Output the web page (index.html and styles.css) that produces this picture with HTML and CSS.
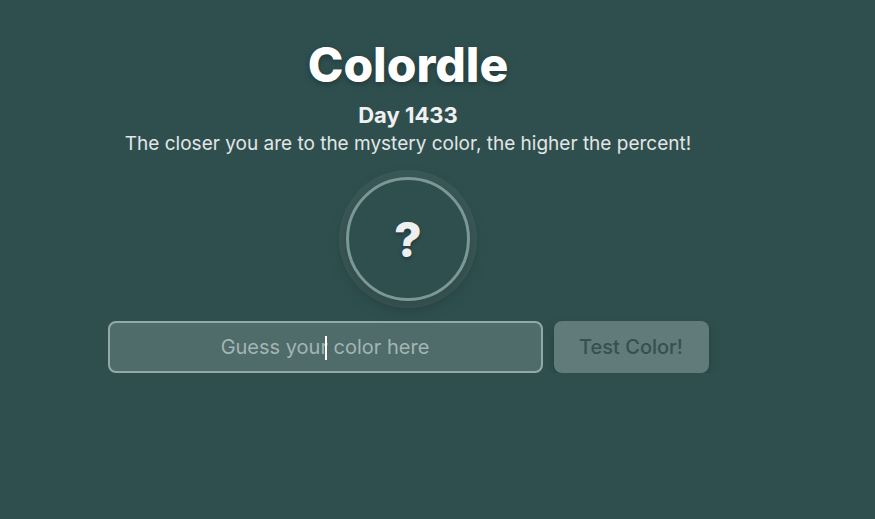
FILE: index.html
```html
<!DOCTYPE html>
<html lang="en">
<head>
    <meta charset="UTF-8">
    <meta name="viewport" content="width=device-width, initial-scale=1.0">
    <title>Colordle</title>
    <link rel="stylesheet" href="styles.css">
</head>
<body>

<main class="game">
    <h1 class="title">Colordle</h1>
    <h2 class="day">Day 1433</h2>
    <p class="intro">The closer you are to the mystery color, the higher the percent!</p>

    <div class="swatch">
        <span>?</span>
    </div>

    <form class="guess-form" onsubmit="return false">
        <div class="input-wrap">
            <input type="text" class="guess-input" placeholder="Guess your color here">
            <span class="caret"></span>
        </div>
        <button type="submit" class="guess-button">Test Color!</button>
    </form>
</main>

</body>
</html>
```

FILE: styles.css
```css
body {
    font-family: Inter, 'Noto Sans', sans-serif;
    background-color: #2f4f4f;
    margin: 0;
    color: #fff;
}
.game {
    width: 816px;
    display: flex;
    flex-direction: column;
    align-items: center;
    padding-top: 34px;
}
.title {
    margin: 0;
    font-size: 48px;
    font-weight: 800;
    line-height: 62px;
    text-shadow: 0 2px 6px rgba(0, 0, 0, 0.3);
}
.day {
    margin: 4px 0 0;
    font-size: 22px;
    font-weight: 700;
    line-height: 30px;
    color: #f0f0f0;
}
.intro {
    margin: 2px 0 0;
    font-size: 19px;
    line-height: 24px;
    color: #e2e6e6;
}
.swatch {
    margin-top: 21px;
    width: 118px;
    height: 118px;
    border-radius: 50%;
    border: 3px solid #7b9796;
    box-shadow: 0 0 0 7px rgba(255, 255, 255, 0.06), 0 6px 18px rgba(0, 0, 0, 0.25);
    display: flex;
    align-items: center;
    justify-content: center;
}
.swatch span {
    font-size: 48px;
    font-weight: 800;
    color: #eef0f0;
    text-shadow: 0 2px 4px rgba(0, 0, 0, 0.3);
}
.guess-form {
    margin-top: 20px;
    display: flex;
    gap: 11px;
}
.input-wrap {
    position: relative;
}
.guess-input {
    width: 435px;
    height: 52px;
    box-sizing: border-box;
    border: 2px solid #93a9a8;
    border-radius: 8px;
    background-color: #4f6b6a;
    color: #fff;
    font-family: inherit;
    font-size: 20px;
    text-align: center;
    outline: none;
}
.guess-input::placeholder {
    color: #a3b5b4;
}
/* blinking text cursor, as it looks while the field has focus */
.caret {
    position: absolute;
    left: 217px;
    top: 15px;
    width: 2px;
    height: 24px;
    background-color: #fff;
}
.guess-button {
    width: 155px;
    height: 52px;
    border: none;
    border-radius: 8px;
    background-color: #617b7a;
    color: #35504f;
    font-family: inherit;
    font-size: 20px;
    font-weight: 500;
    box-shadow: 0 4px 10px rgba(0, 0, 0, 0.2);
    cursor: pointer;
}
```
